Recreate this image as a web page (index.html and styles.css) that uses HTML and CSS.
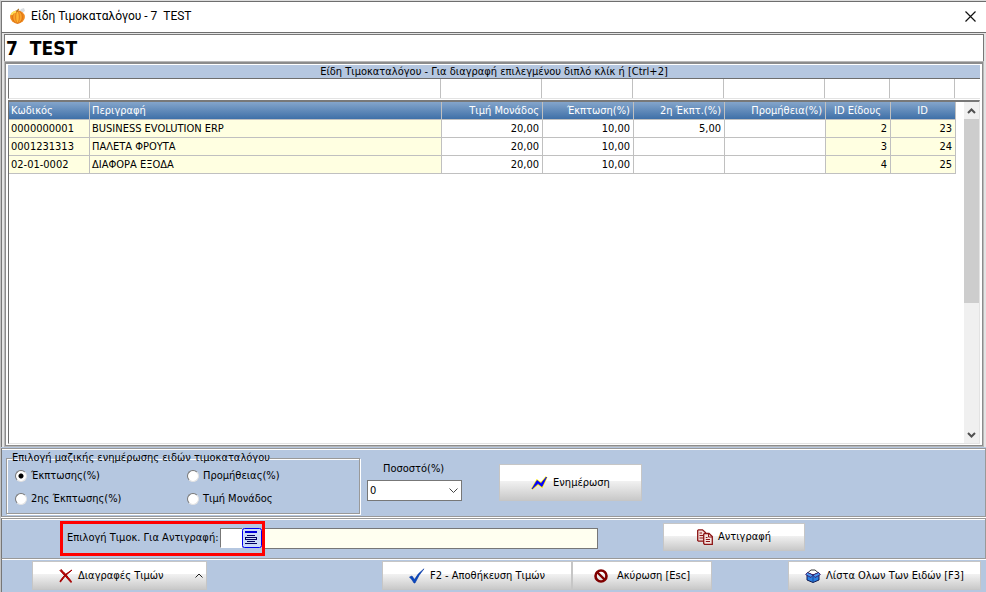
FILE: index.html
```
<!DOCTYPE html>
<html lang="el">
<head>
 <meta charset="utf-8"/>
 <title>Είδη Τιμοκαταλόγου</title>
 <link rel="stylesheet" href="styles.css">
</head>

<body>
<div class="window">

<header class="titlebar">
 <svg class="logo" width="16" height="16" viewBox="0 0 16 16">
  <path d="M9 4 L11 1 L14 0 L15 3 L12 5 Z" fill="#d9dde0"/>
  <ellipse cx="7.500" cy="9" rx="7.400" ry="6.500" fill="#f08a1c"/>
  <ellipse cx="7.500" cy="9" rx="4.800" ry="6.300" fill="#fba52c" stroke="#cf5f10" stroke-width=".7"/>
  <ellipse cx="7.500" cy="9" rx="1.800" ry="6" fill="#ffb634" stroke="#d96c12" stroke-width=".7"/>
  <path d="M1.500 7 Q3 3.500 6 4" stroke="#ffe25a" stroke-width="1.800" fill="none"/>
  <path d="M7 4 Q7 2 9 1" stroke="#a5742a" stroke-width="1.300" fill="none"/>
 </svg>
 <span class="caption">Είδη Τιμοκαταλόγου - 7 &nbsp;TEST</span>
 <button class="close" aria-label="Κλείσιμο">
  <svg width="11" height="11" viewBox="0 0 11 11"><path d="M.5 .5 L10.500 10.500 M10.500 .5 L.5 10.500" stroke="#111" stroke-width="1.200" fill="none"/></svg>
 </button>
</header>

<main class="body">
<h1 class="pricelist">7 &nbsp;TEST</h1>

<section class="items">
 <h2 class="hint">Είδη Τιμοκαταλόγου - Για διαγραφή επιλεγμένου διπλό κλίκ ή [Ctrl+2]</h2>
 <div class="filters">
  <input aria-label="Φίλτρο Κωδικός"><input aria-label="Φίλτρο Περιγραφή"><input aria-label="Φίλτρο Τιμή Μονάδος">
  <input aria-label="Φίλτρο Έκπτωση"><input aria-label="Φίλτρο 2η Έκπτωση"><input aria-label="Φίλτρο Προμήθεια">
  <input aria-label="Φίλτρο ID Είδους"><input aria-label="Φίλτρο ID"><span></span>
 </div>
 <div class="grid">
  <div class="rows">
   <table>
    <colgroup>
     <col class="c-code"><col><col class="c-price"><col class="c-disc"><col class="c-disc">
     <col class="c-price"><col class="c-id"><col class="c-id">
    </colgroup>
    <thead>
     <tr><th>Κωδικός</th><th>Περιγραφή</th><th class="num">Τιμή Μονάδος</th><th class="num">Έκπτωση(%)</th>
     <th class="num">2η Έκπτ.(%)</th><th class="num">Προμήθεια(%)</th><th class="mid">ID Είδους</th><th class="mid">ID</th></tr>
    </thead>
    <tbody>
     <tr><td class="lock">0000000001</td><td class="lock">BUSINESS EVOLUTION ERP</td><td class="num">20,00</td><td class="num">10,00</td>
     <td class="num">5,00</td><td></td><td class="num lock">2</td><td class="num lock">23</td></tr>
     <tr><td class="lock">0001231313</td><td class="lock">ΠΑΛΕΤΑ ΦΡΟΥΤΑ</td><td class="num">20,00</td><td class="num">10,00</td>
     <td></td><td></td><td class="num lock">3</td><td class="num lock">24</td></tr>
     <tr><td class="lock">02-01-0002</td><td class="lock">ΔΙΑΦΟΡΑ ΕΞΟΔΑ</td><td class="num">20,00</td><td class="num">10,00</td>
     <td></td><td></td><td class="num lock">4</td><td class="num lock">25</td></tr>
    </tbody>
   </table>
  </div>
  <div class="scroll">
   <button aria-label="Πάνω"><svg width="9" height="6" viewBox="0 0 9 6"><path d="M1 5 L4.500 1.500 L8 5" stroke="#505050" stroke-width="2" fill="none"/></svg></button>
   <div class="track"><div class="thumb"></div></div>
   <button aria-label="Κάτω"><svg width="9" height="6" viewBox="0 0 9 6"><path d="M1 1 L4.500 4.500 L8 1" stroke="#505050" stroke-width="2" fill="none"/></svg></button>
  </div>
 </div>
</section>
</main>

<section class="panel update">
 <fieldset class="mode">
  <legend>Επιλογή μαζικής ενημέρωσης ειδών τιμοκαταλόγου</legend>
  <label><input type="radio" name="mode" checked>Έκπτωσης(%)</label>
  <label><input type="radio" name="mode">Προμήθειας(%)</label>
  <label><input type="radio" name="mode">2ης Έκπτωσης(%)</label>
  <label><input type="radio" name="mode">Τιμή Μονάδος</label>
 </fieldset>
 <div class="percent">
  <label for="percent">Ποσοστό(%)</label>
  <div class="combo">
   <select id="percent"><option>0</option></select>
   <svg width="9" height="6" viewBox="0 0 9 6"><path d="M.5 .5 L4.500 4.500 L8.500 .5" stroke="#444" fill="none"/></svg>
  </div>
 </div>
 <button class="btn btn-update">
  <svg width="17" height="16" viewBox="0 0 17 16">
   <path d="M1 14 L6 5.500 L10 8.500 L15.500 2 L11 11.500 L7 8.500 Z" fill="#ffef00" stroke="#ffef00" stroke-width="2.200"/>
   <path d="M1 14 L6 5.500 L10 8.500 L15.500 2 L11 11.500 L7 8.500 Z" fill="#00f" stroke="#00f" stroke-width=".8"/>
  </svg>
  Ενημέρωση
 </button>
</section>

<section class="panel copy">
 <div class="source">
  <label for="source">Επιλογή Τιμοκ. Για Αντιγραφή:</label>
  <input id="source" type="text">
  <button class="lookup" aria-label="Λίστα">
   <svg width="20" height="20" viewBox="0 0 20 20">
    <rect x=".5" y=".5" width="19" height="19" rx="2" fill="#cbdcf8" stroke="#0000f0"/>
    <path d="M3 3.500 H15 M3 4.500 H15" stroke="#0000d8"/>
    <path d="M5 7.500 H13 M3 9.500 H15 M3 11.500 H15 M5 13.500 H13 M3 15.500 H15" stroke="#000060"/>
    <path d="M3.500 9 V12 M14.500 9 V12" stroke="#000060"/>
   </svg>
  </button>
 </div>
 <input class="source-name" type="text" readonly aria-label="Τιμοκατάλογος">
 <button class="btn btn-copy">
  <svg width="16" height="16" viewBox="0 0 16 16">
   <path d="M1.500 .8 H5.500 L8.500 3.500 V12.200 H1.500 L.7 11.500 V1.500 Z" fill="#f3d9d6" stroke="#8c1414" stroke-width="1.300"/>
   <path d="M2.500 4 H5 M2.500 6.500 H6 M2.500 9 H6" stroke="#8c1414"/>
   <path d="M7.500 4.500 H12 L15.300 7.500 V15.300 H7.500 L6.700 14.500 V5.300 Z" fill="#f6e4e1" stroke="#8c1414" stroke-width="1.300"/>
   <path d="M11.500 4.500 V8 H15.300 M8.800 8.500 H10.500 M8.800 10.500 H13 M8.800 12.500 H13" stroke="#8c1414" fill="none"/>
  </svg>
  Αντιγραφή
 </button>
</section>

<footer class="actions">
 <button class="btn btn-delete">
  <svg width="14" height="14" viewBox="0 0 14 14">
   <path d="M1 1.500 L2 .5 Q6 4 12.500 12.500 L12 13.500 Q7 8 1 1.500 Z" fill="#c00000" stroke="#a00000"/>
   <path d="M13 1 Q6 6 1.500 13 Q.8 13 1 12 Q5 5 13 1 Z" fill="#c00000" stroke="#a00000"/>
  </svg>
  <span class="label">Διαγραφές Τιμών</span>
  <svg width="8" height="5" viewBox="0 0 8 5"><path d="M.5 4.500 L4 1 L7.500 4.500" stroke="#222" fill="none"/></svg>
 </button>
 <button class="btn btn-save">
  <svg width="16" height="16" viewBox="0 0 16 16"><path d="M.5 9 L3 8 L5.500 11.500 Q9 5 15 .8 Q9.500 7 6 15 H5 Q3 11.500 .5 9 Z" fill="#0a48c0" stroke="#0838a0" stroke-width=".6"/></svg>
  F2 - Αποθήκευση Τιμών
 </button>
 <button class="btn btn-cancel">
  <svg width="14" height="14" viewBox="0 0 14 14"><circle cx="7" cy="7" r="5.500" fill="none" stroke="#800000" stroke-width="2.600"/><path d="M3.500 3.500 L10.500 10.500" stroke="#800000" stroke-width="2.400"/></svg>
  Ακύρωση [Esc]
 </button>
 <button class="btn btn-list">
  <svg width="16" height="14" viewBox="0 0 16 14">
   <path d="M2.500 4 L6 1 H10 L13.500 4 L8 6 Z" fill="#fff" stroke="#222" stroke-width=".9"/>
   <path d="M2 4 L8 6 L14 4 V11 L8 13.500 L2 11 Z" fill="#2b7fe0" stroke="#101a50"/>
   <path d="M.6 5.500 L2.500 3.500 L8 6 L6 8.500 Z M15.400 5.500 L13.500 3.500 L8 6 L10 8.500 Z" fill="#4c9af0" stroke="#3a1060" stroke-width=".8"/>
   <path d="M8 6.500 V13" stroke="#174a9c"/>
  </svg>
  Λίστα Ολων Των Ειδών [F3]
 </button>
</footer>

</div>
</body>
</html>
```
FILE: styles.css
```
* { box-sizing: border-box; }
body {
 margin: 0;
 font-family: "DejaVu Sans Condensed", "Liberation Sans", sans-serif;
 font-size: 11px;
 line-height: 14px;
 color: #000;
}
button, input, select {
 font: inherit;
 color: inherit;
 margin: 0;
 padding: 0;
 border: 0;
 border-radius: 0;
}
h1, h2 { margin: 0; font-weight: normal; }
svg { display: block; flex: none; }

.window {
 display: flex;
 flex-direction: column;
 min-height: 100vh;
 background: #b5c7e0;
 border-top: 1px solid #dcdcdc;
 border-left: 1px solid #c4c4c4;
}
.window > * { border-left: 1px solid #777; }

/* title bar */
.titlebar {
 display: flex;
 align-items: center;
 height: 31px;
 padding: 0 10px 2px 8px;
 background: #fff;
 border-top: 1px solid #6e6e6e;
 font-family: Roboto, "Noto Sans", sans-serif;
 font-size: 12px;
}
.caption { margin-left: 5px; }
.close { margin-left: auto; background: none; }

/* price list name and grid */
.body {
 flex: 1;
 display: flex;
 flex-direction: column;
 background: #e4e4e4;
 border-top: 1px solid #6e6e6e;
 padding: 1px 2px 1px 2px;
}
.pricelist {
 height: 28px;
 padding: 0 1px;
 background: #fff;
 border: 1px solid #777;
 font-size: 19px;
 font-weight: bold;
 line-height: 26px;
}
.items {
 flex: 1;
 display: flex;
 flex-direction: column;
 margin: 0 1px 0 1px;
 padding: 1px 2px 1px 2px;
 background: #fff;
 border: 1px solid #8c8c8c;
 border-top-width: 2px;
 outline: 1px solid #b8b8b8;
}
.hint {
 height: 13px;
 font-size: 11px;
 line-height: 13px;
 text-align: center;
 background: #b5c7e0;
}
.filters {
 display: grid;
 grid-template-columns: 81px 1fr 101px 91px 91px 101px 65px 65px 25px;
 height: 21px;
 border-top: 1px solid #6e6e6e;
 border-left: 1px solid #6e6e6e;
 border-bottom: 1px solid #e3e3e3;
}
.filters input {
 width: 100%;
 padding: 0 3px;
 border-right: 1px solid #c0c0c0;
}
.grid {
 flex: 1;
 display: flex;
 margin-top: 1px;
 border: 1px solid #e3e3e3;
 border-top: 2px solid #787878;
 border-left: 1px solid #6e6e6e;
}
.rows { flex: 1; padding-right: 8px; }
table {
 width: 100%;
 table-layout: fixed;
 border-collapse: separate;
 border-spacing: 0;
}
.c-code { width: 81px; }
.c-price { width: 101px; }
.c-disc { width: 91px; }
.c-id { width: 65px; }
th, td {
 height: 18px;
 padding: 1px 3px 0 2px;
 line-height: 16px;
 text-align: left;
 white-space: nowrap;
 border-right: 1px solid #c0c0c0;
 border-bottom: 1px solid #c0c0c0;
}
th {
 font-weight: normal;
 color: #fff;
 background: linear-gradient(#84a5cb, #3f70a8);
}
.num { text-align: right; }
.mid { text-align: center; }
.lock { background: #ffffe1; }

.scroll {
 display: flex;
 flex-direction: column;
 width: 15px;
 background: #f0f0f0;
}
.scroll button {
 display: flex;
 align-items: center;
 justify-content: center;
 height: 17px;
 background: none;
}
.track { flex: 1; }
.thumb { height: 60%; background: #cdcdcd; }

/* panels */
.panel {
 display: flex;
 margin-top: 1px;
 border-top: 1px solid #999;
 border-right: 1px solid #999;
 border-bottom: 1px solid #999;
 box-shadow: inset 0 1px #fff, 0 1px #fff;
}
.update { height: 69px; padding: 2px 4px; }
.mode {
 display: grid;
 grid-template-columns: 172px 1fr;
 align-content: start;
 row-gap: 9px;
 width: 354px;
 height: 63px;
 margin: 0;
 padding: 4px 8px 0;
 border: 1px solid #999;
 box-shadow: 1px 1px #fff, inset 1px 1px #fff;
}
.mode legend { padding: 0; margin-left: -3px; }
.mode label { display: flex; align-items: center; }
.mode input {
 appearance: none;
 width: 12px;
 height: 12px;
 margin-right: 4px;
 background: #fff;
 border: 1px solid #777;
 border-right-color: #e3e3e3;
 border-bottom-color: #e3e3e3;
 border-radius: 50%;
}
.mode input:checked { background: radial-gradient(circle, #000 2px, #fff 3px); }
.percent {
 width: 95px;
 margin: 11px 0 0 7px;
}
.percent label { display: block; margin-left: 16px; }
.combo {
 display: grid;
 align-items: center;
 height: 21px;
 margin-top: 4px;
}
.combo select, .combo svg { grid-area: 1 / 1; }
.combo select {
 appearance: none;
 width: 100%;
 height: 21px;
 padding: 0 2px;
 background: #fff;
 border: 1px solid #777;
}
.combo svg {
 justify-self: end;
 margin-right: 4px;
 pointer-events: none;
}

.btn {
 display: flex;
 align-items: center;
 justify-content: center;
 gap: 5px;
 white-space: nowrap;
 background: linear-gradient(#fff, #fff 45%, #f1f1f1 46%, #c9c9c9);
 border: 1px solid #c6c6c6;
 font-size: 11px;
}
.btn-update {
 width: 143px;
 height: 37px;
 margin: 13px 0 0 37px;
}

.copy {
 height: 41px;
 padding: 2px 0 0 58px;
}
.source {
 display: flex;
 align-items: center;
 width: 205px;
 height: 35px;
 padding: 0 0 2px 4px;
 border: 3px solid #f00;
}
.source input {
 width: 22px;
 height: 20px;
 margin-left: auto;
 background: #fff;
 border: 1px solid #777;
 border-right: 0;
 border-bottom-color: #fff;
}
.lookup { background: none; }
.source-name {
 width: 333px;
 height: 21px;
 margin-top: 7px;
 background: #fffff0;
 border: 1px solid #777;
 border-left: 0;
}
.btn-copy {
 width: 142px;
 height: 28px;
 margin: 2px 0 0 65px;
}

/* bottom buttons */
.actions {
 display: flex;
 height: 33px;
 padding: 2px 5px 2px 30px;
}
.btn-delete { width: 175px; padding: 0 3px 0 26px; }
.btn-delete .label { flex: 1; text-align: left; }
.btn-save { width: 190px; margin-left: 175px; }
.btn-cancel { width: 140px; gap: 9px; }
.btn-list { width: 193px; margin-left: auto; }
```
